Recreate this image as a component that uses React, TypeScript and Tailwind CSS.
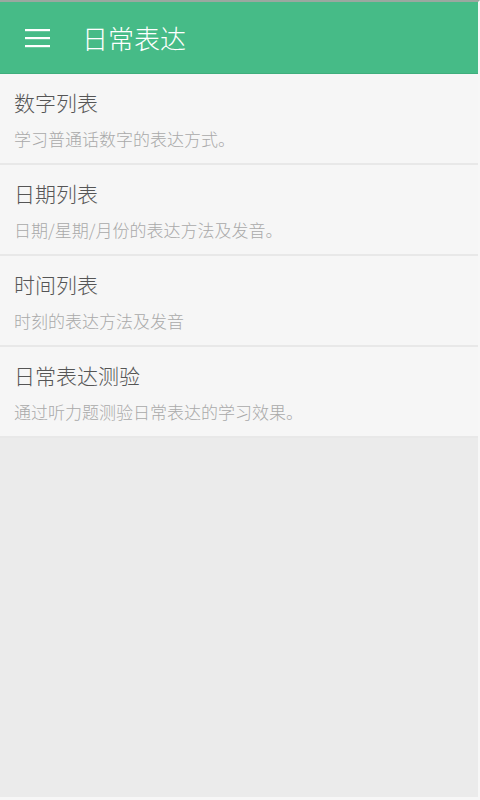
const items = [
  { title: "数字列表", desc: "学习普通话数字的表达方式。" },
  { title: "日期列表", desc: "日期/星期/月份的表达方法及发音。" },
  { title: "时间列表", desc: "时刻的表达方法及发音" },
  { title: "日常表达测验", desc: "通过听力题测验日常表达的学习效果。" },
];

const font = {
  fontFamily: '"Noto Sans CJK SC", "Noto Sans", sans-serif',
};

export default function App() {
  return (
    <div
      className="flex h-[800px] w-[480px] flex-col overflow-hidden border-t-2 border-r-2 border-b-[3px] border-t-[#9aa8a0] border-r-[#f7f7f7] border-b-[#f7f7f7] bg-[#ebebeb]"
      style={font}
    >
      <header className="flex h-[72px] shrink-0 items-center border-b border-[#3fae7c] bg-[#46bb87] pl-[25px]">
        <svg width="26" height="20" viewBox="0 0 26 20" className="shrink-0">
          <rect x="0" y="1" width="25" height="2.2" fill="#fff" />
          <rect x="0" y="9" width="25" height="2.2" fill="#fff" />
          <rect x="0" y="17" width="25" height="2.2" fill="#fff" />
        </svg>
        <h1 className="ml-[31px] text-[26px] leading-none font-light text-white">
          日常表达
        </h1>
      </header>
      <ul className="flex flex-col">
        {items.map((item) => (
          <li
            key={item.title}
            className="flex h-[91px] flex-col border-b-2 border-[#e8e8e8] bg-[#f6f6f6] pl-[14px]"
          >
            <span className="mt-[15px] text-[21px] leading-[26px] font-light text-[#555]">
              {item.title}
            </span>
            <span className="mt-[13px] text-[17px] leading-[22px] font-light text-[#a9a9a9]">
              {item.desc}
            </span>
          </li>
        ))}
      </ul>
    </div>
  );
}
